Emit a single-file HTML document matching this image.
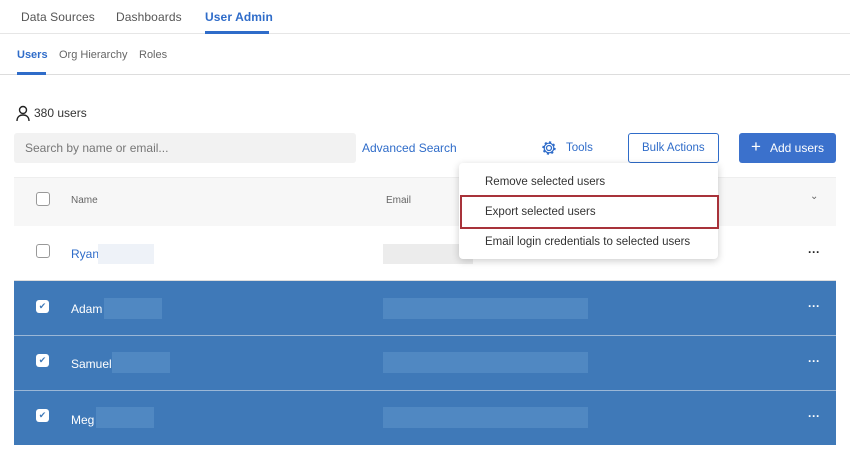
<!DOCTYPE html><html><head><style>
body{margin:0;width:850px;height:452px;background:#fff;font-family:"Liberation Sans",sans-serif;position:relative;overflow:hidden;color:#333}
.a{position:absolute}
.t{font-size:12px;letter-spacing:0.1px}
</style></head><body>
<div class="a" style="left:0;top:33px;width:850px;height:1px;background:#e6e6e6"></div>
<div class="a t" style="left:21px;top:10px;color:#555">Data Sources</div>
<div class="a t" style="left:116px;top:10px;color:#555">Dashboards</div>
<div class="a t" style="left:205px;top:10px;color:#2f6cc9;font-weight:bold">User Admin</div>
<div class="a" style="left:205px;top:31px;width:64px;height:3px;background:#2f6cc9"></div>
<div class="a" style="left:0;top:74px;width:850px;height:1px;background:#ddd"></div>
<div class="a" style="left:17px;top:49px;font-size:11px;color:#2f6cc9;font-weight:bold">Users</div>
<div class="a" style="left:17px;top:72px;width:29px;height:3px;background:#2f6cc9"></div>
<div class="a" style="left:59px;top:49px;font-size:11px;color:#666">Org Hierarchy</div>
<div class="a" style="left:139px;top:49px;font-size:11px;color:#666">Roles</div>
<svg class="a" style="left:15px;top:105px" width="16" height="16" viewBox="0 0 16 16"><circle cx="8" cy="5" r="3.5" fill="none" stroke="#222" stroke-width="1.4"/><path d="M2 16c0-4 2.5-6 6-6s6 2 6 6" fill="none" stroke="#222" stroke-width="1.4"/></svg>
<div class="a" style="left:34px;top:106px;font-size:12px;color:#333">380 users</div>
<div class="a" style="left:14px;top:133px;width:342px;height:30px;background:#f2f2f2;border-radius:3px"></div>
<div class="a" style="left:25px;top:141px;font-size:12px;color:#777">Search by name or email...</div>
<div class="a" style="left:362px;top:141px;font-size:12px;color:#2f6cc9">Advanced Search</div>
<svg class="a" style="left:541px;top:140px" width="16" height="16" viewBox="0 0 16 16"><circle cx="8" cy="8" r="2.5" fill="none" stroke="#2f6cc9" stroke-width="1.3"/><circle cx="8" cy="8" r="5.5" fill="none" stroke="#2f6cc9" stroke-width="2.4" stroke-dasharray="2 2.3"/><circle cx="8" cy="8" r="4.8" fill="none" stroke="#2f6cc9" stroke-width="1.2"/></svg>
<div class="a" style="left:566px;top:142px;font-size:11.5px;color:#2f6cc9">Tools</div>
<div class="a" style="left:628px;top:133px;width:89px;height:28px;border:1px solid #2f6cc9;border-radius:3px"></div>
<div class="a" style="left:642px;top:142px;font-size:11.5px;color:#2f6cc9">Bulk Actions</div>
<div class="a" style="left:739px;top:133px;width:97px;height:30px;background:#3b71cc;border-radius:3px"></div>
<div class="a" style="left:751px;top:137px;font-size:17px;color:#fff">+</div>
<div class="a" style="left:770px;top:141px;font-size:12px;color:#fff">Add users</div>
<div class="a" style="left:14px;top:177px;width:822px;height:49px;background:#f7f7f7;border-top:1px solid #eee"></div>
<div class="a" style="left:36px;top:192px;width:12px;height:12px;border:1px solid #999;border-radius:3px;background:#fff"></div>
<div class="a" style="left:71px;top:195px;font-size:10px;color:#666">Name</div>
<div class="a" style="left:386px;top:195px;font-size:10px;color:#666">Email</div>
<div class="a" style="left:810px;top:191px;font-size:10px;color:#666">⌄</div>
<div class="a" style="left:14px;top:226px;width:822px;height:54px;background:#fff;border-bottom:1px solid #ddd"></div>
<div class="a" style="left:36px;top:244px;width:12px;height:12px;border:1px solid #999;border-radius:3px;background:#fff"></div>
<div class="a" style="left:71px;top:247px;font-size:12px;color:#2f6cc9">Ryan</div>
<div class="a" style="left:98px;top:244px;width:56px;height:20px;background:#eef2f8"></div>
<div class="a" style="left:383px;top:244px;width:90px;height:20px;background:#ececec"></div>
<div class="a" style="left:808px;top:245px;font-size:12px;color:#222;font-weight:bold">···</div>
<div class="a" style="left:14px;top:281px;width:822px;height:54px;background:#3f79b8"></div>
<div class="a" style="left:14px;top:336px;width:822px;height:54px;background:#3f79b8"></div>
<div class="a" style="left:14px;top:391px;width:822px;height:54px;background:#3f79b8"></div>
<div class="a" style="left:14px;top:335px;width:822px;height:1px;background:#9bb7d6"></div>
<div class="a" style="left:14px;top:390px;width:822px;height:1px;background:#9bb7d6"></div>
<div class="a" style="left:36px;top:300px;width:13px;height:13px;background:#fff;border-radius:3px;font-size:9px;color:#3f79b8;text-align:center;line-height:13px">✔</div>
<div class="a" style="left:36px;top:354px;width:13px;height:13px;background:#fff;border-radius:3px;font-size:9px;color:#3f79b8;text-align:center;line-height:13px">✔</div>
<div class="a" style="left:36px;top:409px;width:13px;height:13px;background:#fff;border-radius:3px;font-size:9px;color:#3f79b8;text-align:center;line-height:13px">✔</div>
<div class="a" style="left:71px;top:302px;font-size:12px;color:#fff">Adam</div>
<div class="a" style="left:104px;top:298px;width:58px;height:21px;background:#5088c2"></div>
<div class="a" style="left:71px;top:357px;font-size:12px;color:#fff">Samuel</div>
<div class="a" style="left:112px;top:352px;width:58px;height:21px;background:#5088c2"></div>
<div class="a" style="left:71px;top:413px;font-size:12px;color:#fff">Meg</div>
<div class="a" style="left:96px;top:407px;width:58px;height:21px;background:#5088c2"></div>
<div class="a" style="left:383px;top:298px;width:205px;height:21px;background:#5088c2"></div>
<div class="a" style="left:383px;top:352px;width:205px;height:21px;background:#5088c2"></div>
<div class="a" style="left:383px;top:407px;width:205px;height:21px;background:#5088c2"></div>
<div class="a" style="left:808px;top:299px;font-size:12px;color:#fff;font-weight:bold">···</div>
<div class="a" style="left:808px;top:354px;font-size:12px;color:#fff;font-weight:bold">···</div>
<div class="a" style="left:808px;top:409px;font-size:12px;color:#fff;font-weight:bold">···</div>
<div class="a" style="left:459px;top:163px;width:259px;height:96px;background:#fff;border-radius:4px;box-shadow:0 2px 8px rgba(0,0,0,.2)"></div>
<div class="a" style="left:485px;top:176px;font-size:11.5px;color:#333">Remove selected users</div>
<div class="a" style="left:460px;top:195px;width:255px;height:30px;border:2px solid #a8323a"></div>
<div class="a" style="left:485px;top:206px;font-size:11.5px;color:#333">Export selected users</div>
<div class="a" style="left:485px;top:236px;font-size:11.5px;color:#333">Email login credentials to selected users</div>
</body></html>
